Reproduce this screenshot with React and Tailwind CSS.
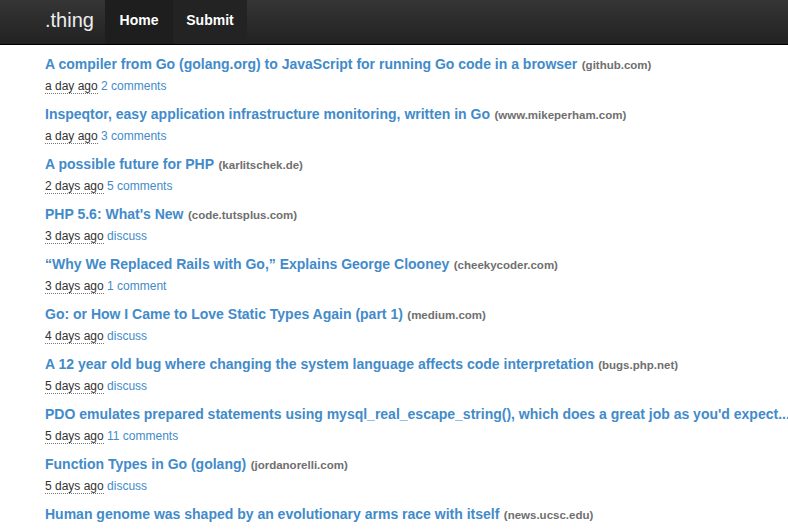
import React from 'react';

const stories = [
  { title: 'A compiler from Go (golang.org) to JavaScript for running Go code in a browser', domain: 'github.com', ago: 'a day ago', comments: '2 comments' },
  { title: 'Inspeqtor, easy application infrastructure monitoring, written in Go', domain: 'www.mikeperham.com', ago: 'a day ago', comments: '3 comments' },
  { title: 'A possible future for PHP', domain: 'karlitschek.de', ago: '2 days ago', comments: '5 comments' },
  { title: "PHP 5.6: What's New", domain: 'code.tutsplus.com', ago: '3 days ago', comments: 'discuss' },
  { title: '\u201cWhy We Replaced Rails with Go,\u201d Explains George Clooney', domain: 'cheekycoder.com', ago: '3 days ago', comments: '1 comment' },
  { title: 'Go: or How I Came to Love Static Types Again (part 1)', domain: 'medium.com', ago: '4 days ago', comments: 'discuss' },
  { title: 'A 12 year old bug where changing the system language affects code interpretation', domain: 'bugs.php.net', ago: '5 days ago', comments: 'discuss' },
  { title: "PDO emulates prepared statements using mysql_real_escape_string(), which does a great job as you'd expect...", domain: 'blog.ircmaxell.com', ago: '5 days ago', comments: '11 comments' },
  { title: 'Function Types in Go (golang)', domain: 'jordanorelli.com', ago: '5 days ago', comments: 'discuss' },
  { title: 'Human genome was shaped by an evolutionary arms race with itself', domain: 'news.ucsc.edu', ago: '6 days ago', comments: 'discuss' },
];

function Story({ s }) {
  return (
    <li className="mb-[8px]">
      <div className="h-5 leading-5 whitespace-nowrap overflow-hidden">
        <a className="text-[14px] font-bold text-[#428bca]">{s.title}</a>{' '}
        <span className="text-[11.5px] font-bold text-[#6f6f6f]">({s.domain})</span>
      </div>
      <div className="h-5 mt-[2px] leading-5 text-[12px]">
        <span className="text-[#333] border-b border-dotted border-[#777]">{s.ago}</span>{' '}
        <a className="text-[#428bca]">{s.comments}</a>
      </div>
    </li>
  );
}

export default function App() {
  return (
    <div className="h-screen overflow-hidden bg-white" style={{ fontFamily: '"Liberation Sans", Arial, sans-serif' }}>
      <header className="h-[45px] bg-gradient-to-b from-[#353535] to-[#222] border-b border-black flex items-stretch pl-[45px]">
        <span className="text-[20px] text-[#eee] leading-[40px] w-[60px]">.thing</span>
        <nav className="flex">
          <a className="w-[68px] text-center bg-[#1e1e1e] text-white font-bold text-[14px] leading-[40px] [text-shadow:0_-1px_0_rgba(0,0,0,0.25)]">Home</a>
          <a className="w-[74px] text-center bg-[#232323] text-white font-bold text-[14px] leading-[40px] [text-shadow:0_-1px_0_rgba(0,0,0,0.25)]">Submit</a>
        </nav>
      </header>
      <ul className="pl-[45px] pt-[9px]">
        {stories.map((s, i) => (
          <Story key={i} s={s} />
        ))}
      </ul>
    </div>
  );
}
